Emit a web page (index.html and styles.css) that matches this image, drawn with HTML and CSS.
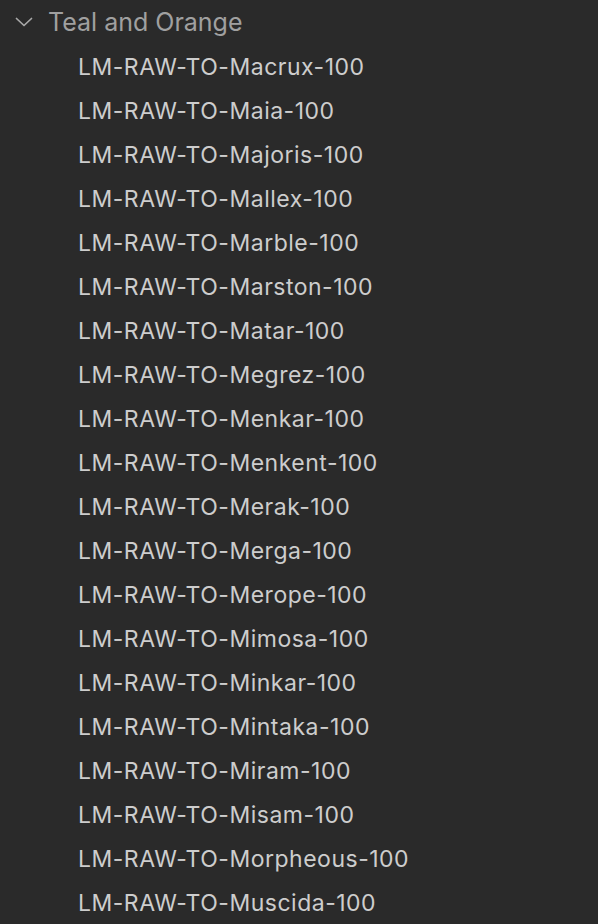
FILE: index.html
```html
<!DOCTYPE html>
<html>
<head>
    <title>Presets</title>
    <link rel="stylesheet" href="styles.css">
</head>
<body>
    <div class="group">
        <div class="group-header">
            <svg class="chevron" width="18" height="10" viewBox="0 0 18 10">
                <path d="M1.5 1.5 L9 8.5 L16.5 1.5" fill="none" stroke="#a8a8a8" stroke-width="1.7" stroke-linecap="round" stroke-linejoin="round"/>
            </svg>
            <span class="group-title">Teal and Orange</span>
        </div>
        <ul class="preset-list">
            <li>LM-RAW-TO-Macrux-100</li>
            <li>LM-RAW-TO-Maia-100</li>
            <li>LM-RAW-TO-Majoris-100</li>
            <li>LM-RAW-TO-Mallex-100</li>
            <li>LM-RAW-TO-Marble-100</li>
            <li>LM-RAW-TO-Marston-100</li>
            <li>LM-RAW-TO-Matar-100</li>
            <li>LM-RAW-TO-Megrez-100</li>
            <li>LM-RAW-TO-Menkar-100</li>
            <li>LM-RAW-TO-Menkent-100</li>
            <li>LM-RAW-TO-Merak-100</li>
            <li>LM-RAW-TO-Merga-100</li>
            <li>LM-RAW-TO-Merope-100</li>
            <li>LM-RAW-TO-Mimosa-100</li>
            <li>LM-RAW-TO-Minkar-100</li>
            <li>LM-RAW-TO-Mintaka-100</li>
            <li>LM-RAW-TO-Miram-100</li>
            <li>LM-RAW-TO-Misam-100</li>
            <li>LM-RAW-TO-Morpheous-100</li>
            <li>LM-RAW-TO-Muscida-100</li>
        </ul>
    </div>
</body>
</html>
```

FILE: styles.css
```css
body {
    margin: 0;
    background-color: #2a2a2a;
    font-family: Inter, "Noto Sans", sans-serif;
    overflow: hidden;
}
.group-header {
    display: flex;
    align-items: center;
    height: 44px;
    padding-left: 15px;
}
.chevron {
    margin-right: 15px;
}
.group-title {
    color: #a0a0a0;
    font-size: 25px;
}
.preset-list {
    list-style: none;
    margin: 0;
    padding: 0 0 0 78px;
}
.preset-list li {
    height: 44px;
    line-height: 46px;
    color: #cdcdcd;
    font-size: 23px;
    letter-spacing: 0.5px;
}
```
